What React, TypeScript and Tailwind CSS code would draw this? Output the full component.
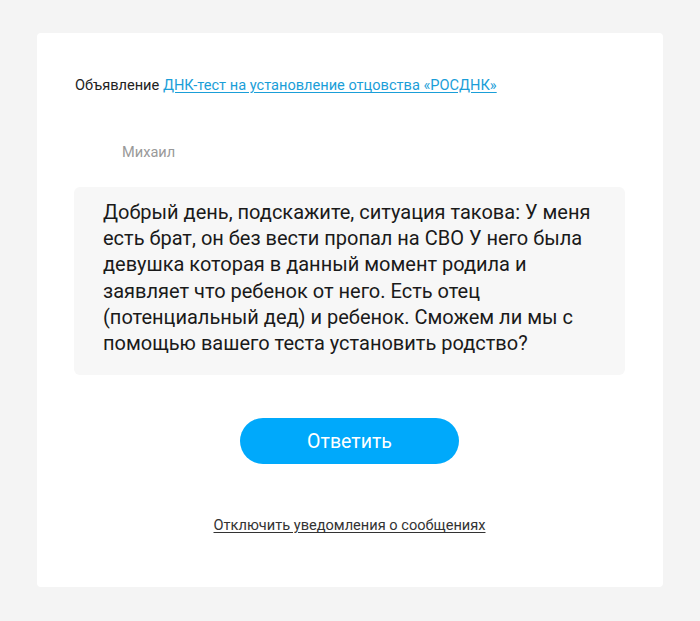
import React from 'react';

const message =
  'Добрый день, подскажите, ситуация такова: У меня есть брат, он без вести пропал на СВО У него была девушка которая в данный момент родила и заявляет что ребенок от него. Есть отец (потенциальный дед) и ребенок. Сможем ли мы с помощью вашего теста установить родство?';

const App: React.FC = () => {
  return (
    <div
      className="min-h-[621px] bg-[#f4f4f4] pt-[33px] pb-[34px]"
      style={{ fontFamily: 'Roboto, "Noto Sans", sans-serif' }}
    >
      <div className="mx-[37px] flex h-[554px] flex-col rounded-[4px] bg-white pt-[42px] pl-[37px] pr-[38px]">
        <p className="pl-[1px] text-[14.6px] leading-[20px] text-[#222]">
          Объявление{' '}
          <a href="#" className="text-[#1a9ed8] underline underline-offset-2">
            ДНК-тест на установление отцовства «РОСДНК»
          </a>
        </p>

        <p className="mt-[47px] pl-[48px] text-[14.6px] leading-[20px] text-[#999]">Михаил</p>

        <div className="mt-[25px] rounded-[6px] bg-[#f7f7f7] pt-[12px] pb-[19px] pl-[29px] pr-[29px]">
          <p className="text-[20px] leading-[26.2px] text-[#1a1a1a]">{message}</p>
        </div>

        <div className="mt-[43px] flex justify-center">
          <button className="h-[46px] w-[219px] rounded-full bg-[#00a9fb] text-[19.5px] text-white">
            Ответить
          </button>
        </div>

        <div className="mt-[51px] flex justify-center">
          <a href="#" className="text-[14.6px] leading-[20px] text-[#333] underline underline-offset-2">
            Отключить уведомления о сообщениях
          </a>
        </div>
      </div>
    </div>
  );
};

export default App;
